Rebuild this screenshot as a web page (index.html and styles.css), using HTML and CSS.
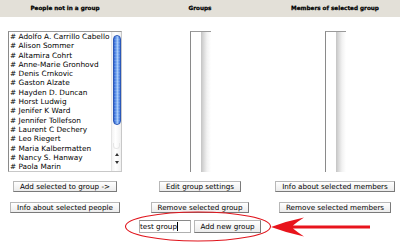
FILE: index.html
```html
<!DOCTYPE html>
<html>
<head>
<meta charset="utf-8">
<link rel="stylesheet" href="styles.css">
</head>
<body>
<div class="page">
  <div class="heads">
    <div class="head">People not in a group</div>
    <div class="head">Groups</div>
    <div class="head">Members of selected group</div>
  </div>
  <div class="cols">
    <div class="col">
      <div class="listbox wide">
        <ul class="items">
          <li># Adolfo A. Carrillo Cabello</li>
          <li># Alison Sommer</li>
          <li># Altamira Cohrt</li>
          <li># Anne-Marie Gronhovd</li>
          <li># Denis Crnkovic</li>
          <li># Gaston Alzate</li>
          <li># Hayden D. Duncan</li>
          <li># Horst Ludwig</li>
          <li># Jenifer K Ward</li>
          <li># Jennifer Tollefson</li>
          <li># Laurent C Dechery</li>
          <li># Leo Riegert</li>
          <li># Maria Kalbermatten</li>
          <li># Nancy S. Hanway</li>
          <li># Paola Marin</li>
        </ul>
        <div class="scroll">
          <div class="thumb"></div>
          <div class="trackend"></div>
          <div class="arrows"><span class="up"></span><span class="down"></span></div>
        </div>
      </div>
      <button class="btn first">Add selected to group -&gt;</button>
      <button class="btn">Info about selected people</button>
    </div>
    <div class="col">
      <div class="listbox narrow">
        <div class="blank"></div>
        <div class="track"></div>
      </div>
      <button class="btn first">Edit group settings</button>
      <button class="btn">Remove selected group</button>
      <div class="newrow">
        <div class="field">test group<span class="caret"></span></div>
        <button class="btn add">Add new group</button>
      </div>
    </div>
    <div class="col">
      <div class="listbox narrow">
        <div class="blank"></div>
        <div class="track"></div>
      </div>
      <button class="btn first">Info about selected members</button>
      <button class="btn">Remove selected members</button>
    </div>
  </div>
  <svg class="annot" width="400" height="242" viewBox="0 0 400 242">
    <ellipse cx="198" cy="226.5" rx="72.5" ry="14.5" fill="none" stroke="#e0141c" stroke-width="1.1"/>
    <path d="M271 227 Q287 221 304 217.5 Q297 222 293 225.5 L370 225.5 L370 228.6 L293 228.6 Q297 232 304 236.5 Q287 233 271 227 Z" fill="#e8141c"/>
  </svg>
</div>
</body>
</html>
```
FILE: styles.css
```css
* { box-sizing: border-box; }
html, body { margin: 0; padding: 0; background: #fff; }
body { font-family: "DejaVu Sans", sans-serif; color: #000; }
.page { position: relative; width: 400px; height: 242px; overflow: hidden; }

.heads {
  display: grid;
  grid-template-columns: 130px 140px 130px;
  height: 17px;
  background: #e3e0d8;
  align-items: center;
}
.head {
  text-align: center;
  font-weight: bold;
  font-size: 5.7px;
  line-height: 17px;
  color: #000;
  -webkit-text-stroke: 0.25px #000;
}

.cols {
  display: grid;
  grid-template-columns: 130px 140px 130px;
  padding-top: 14px;
}
.col { display: flex; flex-direction: column; align-items: center; }

.listbox {
  height: 141px;
  display: flex;
  border-top: 1px solid #9a9a9a;
  border-left: 1px solid #8a8a8a;
  border-bottom: 1px solid #c8c8c8;
  border-right: 1px solid #c8c8c8;
  background: #fff;
}
.listbox.wide { width: 114px; }
.listbox.narrow { width: 21px; border-right: none; border-bottom: none; }

.items {
  list-style: none;
  margin: 0;
  padding: 0 0 0 1px;
  flex: 1;
  font-size: 7.35px;
  line-height: 9.3px;
  white-space: nowrap;
  overflow: hidden;
}
.scroll {
  width: 10px;
  position: relative;
  border-left: 1px solid #e4e4e4;
  background: linear-gradient(to right, #f4f4f4, #fff 40%, #f0f0f0);
  display: flex;
  flex-direction: column;
  align-items: center;
}
.thumb {
  margin-top: 3px;
  width: 8px;
  height: 90px;
  border-radius: 4px;
  border: 1px solid #2b58b8;
  background:
    repeating-linear-gradient(to bottom, rgba(255,255,255,0.12) 0 1px, rgba(0,0,0,0) 1px 3px),
    linear-gradient(to right, #2f63d0, #7fb0f6 45%, #a9cdfa 55%, #3d74dc);
}
.trackend {
  margin-top: 18px;
  width: 7px;
  height: 6px;
  border-radius: 0 0 4px 4px;
  border: 1px solid #e6e6e6;
  border-top: none;
}
.arrows {
  margin-top: 4px;
  display: flex;
  flex-direction: column;
  align-items: center;
  gap: 5px;
}
.up, .down { width: 0; height: 0; border-left: 2px solid transparent; border-right: 2px solid transparent; }
.up { border-bottom: 3px solid #333; }
.down { border-top: 3px solid #333; }

.blank { width: 10px; }
.track {
  flex: 1;
  background: linear-gradient(to right, #c4c4c4, #dcdcdc 30%, #f2f2f2 60%, #fff);
}

.btn {
  font-family: "DejaVu Sans", sans-serif;
  font-size: 7.2px;
  line-height: 9px;
  height: 11px;
  padding: 0 6px;
  margin: 0;
  color: #000;
  background: linear-gradient(#ffffff, #ececec);
  border: 1px solid #b8b8b8;
  border-right-color: #7a7a7a;
  border-bottom-color: #7a7a7a;
  border-radius: 0;
  white-space: nowrap;
}
.btn.first { margin-top: 9px; }
.btn + .btn { margin-top: 10px; }

.newrow {
  margin-top: 7px;
  display: flex;
  align-items: center;
  gap: 3px;
}
.field {
  width: 52px;
  height: 13px;
  border: 1px solid #b0b0b0;
  border-top-color: #8a8a8a;
  font-size: 7.2px;
  line-height: 11px;
  padding-left: 0;
  white-space: nowrap;
  display: flex;
  align-items: center;
}
.caret { display: inline-block; width: 1px; height: 9px; background: #000; margin-left: 0.5px; }
.btn.add { height: 13px; width: 67px; padding: 0; }

.annot { position: absolute; left: 0; top: 0; pointer-events: none; }
```
